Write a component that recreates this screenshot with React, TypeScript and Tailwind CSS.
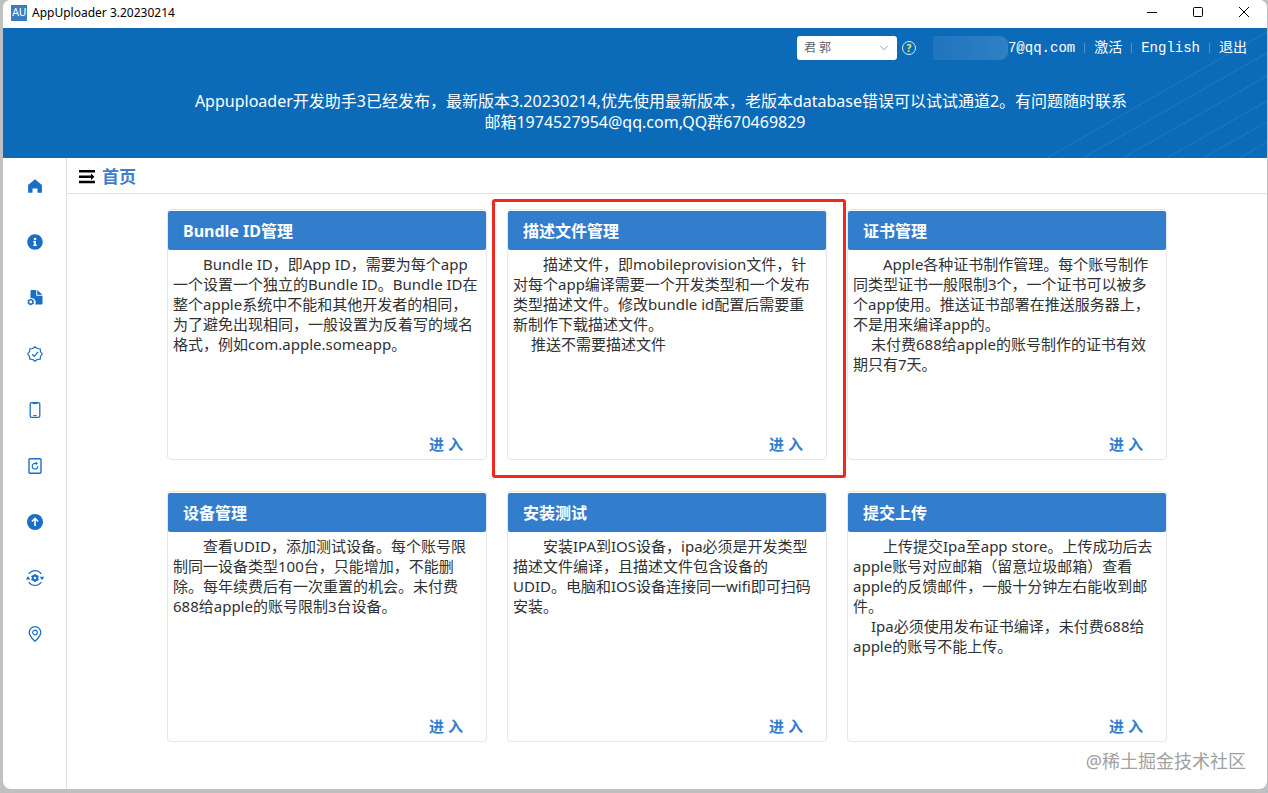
import { ChevronDown } from 'lucide-react';
import { FaInfoCircle } from 'react-icons/fa';

interface Feature {
  title: string;
  paragraphs: string[];
  highlighted?: boolean;
}

const features: Feature[] = [
  {
    title: 'Bundle ID管理',
    paragraphs: [
      'Bundle ID，即App ID，需要为每个app一个设置一个独立的Bundle ID。Bundle ID在整个apple系统中不能和其他开发者的相同，为了避免出现相同，一般设置为反着写的域名格式，例如com.apple.someapp。',
    ],
  },
  {
    title: '描述文件管理',
    paragraphs: [
      '描述文件，即mobileprovision文件，针对每个app编译需要一个开发类型和一个发布类型描述文件。修改bundle id配置后需要重新制作下载描述文件。',
      '推送不需要描述文件',
    ],
    highlighted: true,
  },
  {
    title: '证书管理',
    paragraphs: [
      'Apple各种证书制作管理。每个账号制作同类型证书一般限制3个，一个证书可以被多个app使用。推送证书部署在推送服务器上，不是用来编译app的。',
      '未付费688给apple的账号制作的证书有效期只有7天。',
    ],
  },
  {
    title: '设备管理',
    paragraphs: [
      '查看UDID，添加测试设备。每个账号限制同一设备类型100台，只能增加，不能删除。每年续费后有一次重置的机会。未付费688给apple的账号限制3台设备。',
    ],
  },
  {
    title: '安装测试',
    paragraphs: [
      '安装IPA到IOS设备，ipa必须是开发类型描述文件编译，且描述文件包含设备的UDID。电脑和IOS设备连接同一wifi即可扫码安装。',
    ],
  },
  {
    title: '提交上传',
    paragraphs: [
      '上传提交Ipa至app store。上传成功后去apple账号对应邮箱（留意垃圾邮箱）查看apple的反馈邮件，一般十分钟左右能收到邮件。',
      'Ipa必须使用发布证书编译，未付费688给apple的账号不能上传。',
    ],
  },
];

function HomeIcon() {
  return (
    <svg viewBox="0 0 16 16" className="h-4 w-4" fill="currentColor">
      <path d="M8 1.2 14.6 6.8a.8.8 0 0 1 .3.6V14.800h-4.400v-4.200h-5V14.800H1.100V7.400a.8.8 0 0 1 .3-.6Z" />
    </svg>
  );
}

function FileCogIcon() {
  return (
    <svg viewBox="0 0 16 16" className="h-4 w-4" fill="currentColor">
      <path d="M4.500 0H9.200v5.800h6.300v7.700a1 1 0 0 1-1 1H8.200A4.400 4.400 0 0 0 3.500 8V1a1 1 0 0 1 1-1Z" />
      <path d="M10.200 0 15.500 4.800h-5.300Z" />
      <circle cx="3.7" cy="12" r="2.2" fill="none" stroke="currentColor" strokeWidth="1.5" />
      <path
        d="M3.700 8.700v1M3.700 14.300v1M.8 10.400l.9.5M5.700 13.100l.9.5M.8 13.600l.9-.5M5.700 10.900l.9-.5"
        stroke="currentColor"
        strokeWidth="1.2"
      />
    </svg>
  );
}

function CertificateIcon() {
  return (
    <svg
      viewBox="0 0 16 16"
      className="h-4 w-4"
      fill="none"
      stroke="currentColor"
      strokeWidth="1.2"
      strokeLinejoin="round"
    >
      <path d="M15.300 8 13.500 10.300 13.200 13.200 10.300 13.500 8 15.300 5.700 13.500 2.800 13.200 2.500 10.300.7 8 2.500 5.700 2.800 2.800 5.700 2.500 8 .7 10.300 2.500 13.200 2.800 13.500 5.700Z" />
      <path d="M5.200 8.200 7.300 10.300 11 5.800" strokeWidth="1.3" />
    </svg>
  );
}

function PhoneIcon() {
  return (
    <svg viewBox="0 0 16 16" className="h-4 w-4" fill="none" stroke="currentColor" strokeWidth="1.3">
      <rect x="3.2" y=".7" width="9.6" height="14.6" rx="1.4" />
      <path d="M5.600 1.500h4.800" strokeWidth="1.2" />
      <path d="M6.200 13.600h3.600" strokeWidth="1" />
    </svg>
  );
}

function DeviceRecoverIcon() {
  return (
    <svg viewBox="0 0 16 16" className="h-4 w-4" fill="none" stroke="currentColor" strokeWidth="1.4">
      <rect x="2" y=".7" width="12" height="14.6" rx="1" />
      <path d="M10.800 8.200A2.800 2.800 0 1 1 8 5.400h1" strokeWidth="1.1" />
      <path d="M8.600 3.600 11 5.500 8.600 7.300Z" fill="currentColor" stroke="none" />
    </svg>
  );
}

function UploadIcon() {
  return (
    <svg viewBox="0 0 16 16" className="h-4 w-4">
      <circle cx="8" cy="8" r="8" fill="currentColor" />
      <path d="M8 12V4.600M4.900 7.500 8 4.400l3.100 3.100" fill="none" stroke="#fff" strokeWidth="1.6" />
    </svg>
  );
}

function SyncCogIcon() {
  return (
    <svg viewBox="0 0 20 18" className="h-[18px] w-5" fill="none" stroke="currentColor">
      <path d="M3.800 5A7.300 7.300 0 0 1 16.200 5M16.200 13A7.300 7.300 0 0 1 3.800 13" strokeWidth="1.3" />
      <path d="M.8 10.400 3 7 5.200 10.400ZM14.800 7.800h4.400L17 11.200Z" fill="currentColor" stroke="none" />
      <circle cx="10" cy="9" r="2.3" strokeWidth="2" />
      <path
        d="M10 5v1.400M10 11.600V13M6.500 7l1.300.7M12.200 10.300l1.300.7M6.500 11l1.300-.7M12.200 7.700l1.300-.7"
        strokeWidth="1.7"
      />
    </svg>
  );
}

function PinIcon() {
  return (
    <svg viewBox="0 0 16 16" className="h-4 w-4" fill="none" stroke="currentColor" strokeWidth="1.3">
      <path d="M8 15.200C5.500 12.800 2.200 10.100 2.200 6.500a5.800 5.800 0 0 1 11.600 0C13.800 10.100 10.500 12.800 8 15.200Z" />
      <circle cx="8" cy="6.5" r="2.3" strokeWidth="1.2" />
    </svg>
  );
}

function MenuUnfoldIcon() {
  return (
    <svg viewBox="0 0 16 14" className="h-[14px] w-4" fill="currentColor">
      <path d="M0 0h16v2.500H0ZM0 5.500h12V3.500L15.500 6.700 12 10V8H0ZM0 10.800h16v2.500H0Z" />
    </svg>
  );
}

const navItems = [
  { label: '首页', icon: <HomeIcon /> },
  { label: 'Bundle ID管理', icon: <FaInfoCircle className="h-4 w-4" /> },
  { label: '描述文件管理', icon: <FileCogIcon /> },
  { label: '证书管理', icon: <CertificateIcon /> },
  { label: '设备管理', icon: <PhoneIcon /> },
  { label: '安装测试', icon: <DeviceRecoverIcon /> },
  { label: '提交上传', icon: <UploadIcon /> },
  { label: '设置', icon: <SyncCogIcon /> },
  { label: '位置', icon: <PinIcon /> },
];

function TitleBar() {
  return (
    <div className="flex h-7 items-center justify-between bg-white pl-2">
      <div className="flex items-center gap-[5px] pb-[3px]">
        <span className="flex h-4 w-4 items-center justify-center bg-[#3c7dbd] font-['Roboto',sans-serif] text-[11px] leading-4 text-white">
          AU
        </span>
        <span className="text-[12px] leading-4 text-black">AppUploader 3.20230214</span>
      </div>
      <div className="flex pb-1 text-black">
        <button aria-label="Minimize" className="flex h-6 w-[46px] items-center justify-center">
          <svg viewBox="0 0 10 10" className="h-[10px] w-[10px]" stroke="currentColor">
            <path d="M0 5.500h10" />
          </svg>
        </button>
        <button aria-label="Maximize" className="flex h-6 w-[46px] items-center justify-center">
          <svg viewBox="0 0 10 10" className="h-[10px] w-[10px]" fill="none" stroke="currentColor">
            <rect x=".5" y=".5" width="9" height="9" rx="1" />
          </svg>
        </button>
        <button aria-label="Close" className="flex h-6 w-[46px] items-center justify-center">
          <svg viewBox="0 0 10 10" className="h-[10px] w-[10px]" stroke="currentColor">
            <path d="M0 0l10 10M10 0 0 10" />
          </svg>
        </button>
      </div>
    </div>
  );
}

function Separator() {
  return <span className="h-[10px] w-px bg-[#4a93cf]" />;
}

function Banner() {
  return (
    <header className="relative bg-[#0c6bb8] pb-[25px] text-white">
      <svg
        viewBox="0 0 220 130"
        className="pointer-events-none absolute right-0 bottom-0 h-[130px] w-[220px]"
        fill="none"
        stroke="#1a75be"
        strokeWidth="1.5"
      >
        <path d="M0 130 220 4M36 130 220 25M76 130 220 48M120 130 220 73M156 130 220 94M193 130 220 114" />
      </svg>
      <div className="relative flex h-10 items-center justify-end pr-5">
        <div className="relative mr-[5px]">
          <select
            aria-label="账号"
            className="block h-6 w-[100px] appearance-none rounded-[3px] bg-white pr-6 pl-[7px] text-[12px] text-[#606266]"
          >
            <option>君 郭</option>
          </select>
          <ChevronDown
            className="pointer-events-none absolute top-[5px] right-[6px] h-[14px] w-[14px] text-[#b4b8c0]"
            strokeWidth={1.8}
          />
        </div>
        <button
          aria-label="帮助"
          className="mr-[17px] flex h-[14px] w-[14px] items-center justify-center rounded-full border border-[#d8f0f0] text-[10px] leading-3 font-bold text-[#e4ee6a]"
        >
          ?
        </button>
        <div className="flex items-center gap-[9px] font-['Liberation_Mono','Noto_Sans_CJK_SC',monospace] text-[14px] leading-5">
          <div className="flex items-center">
            <span className="h-6 w-[75px] rounded-r-lg bg-linear-to-r from-[#1f75bf] to-[#2f80c4]" />
            <span>7@qq.com</span>
          </div>
          <Separator />
          <a href="#activate">激活</a>
          <Separator />
          <a href="#language">English</a>
          <Separator />
          <a href="#logout">退出</a>
        </div>
      </div>
      <p className="relative mt-[23px] pr-[137px] pl-[157px] text-center indent-8 text-[16px] leading-[21px]">
        Appuploader开发助手3已经发布，最新版本3.20230214,优先使用最新版本，老版本database错误可以试试通道2。有问题随时联系邮箱1974527954@qq.com,QQ群670469829
      </p>
    </header>
  );
}

function Sidebar() {
  return (
    <nav className="flex w-16 shrink-0 flex-col border-r border-[#dcdfe6] text-[#1a6fc4]">
      {navItems.map((item) => (
        <button
          key={item.label}
          aria-label={item.label}
          title={item.label}
          className="flex h-14 items-center justify-center"
        >
          {item.icon}
        </button>
      ))}
    </nav>
  );
}

function FeatureCard({ title, paragraphs, highlighted }: Feature) {
  return (
    <section className="relative flex min-h-[251px] flex-col rounded-[4px] border border-[#e4e7ed] bg-white pt-px">
      <h2 className="rounded-[2px] bg-[#337ecc] px-[15px] pt-px text-[16px] leading-[38px] font-bold text-white">
        {title}
      </h2>
      <div className="flex-1 pt-1 pr-2 pl-[5px] text-[15px] leading-5 text-[#303133]">
        {paragraphs.map((text, i) => (
          <p key={text} className={i === 0 ? 'indent-[30px]' : 'indent-[18px]'}>
            {text}
          </p>
        ))}
      </div>
      <div className="flex justify-end pr-[23px] pb-[5px]">
        <button className="text-[15px] leading-5 font-bold text-[#337ecc]">进 入</button>
      </div>
      {highlighted && (
        <div className="pointer-events-none absolute -top-[11px] -right-5 -bottom-[19px] -left-4 z-10 rounded-[3px] border-3 border-[#f0281e]" />
      )}
    </section>
  );
}

export default function App() {
  return (
    <div className="flex min-h-screen flex-col bg-[#bfc0c2] pr-px pb-1 pl-[3px] font-['Noto_Sans','Noto_Sans_CJK_SC',sans-serif]">
      <div className="relative flex flex-1 flex-col overflow-hidden rounded-lg bg-white">
        <TitleBar />
        <Banner />
        <div className="flex flex-1">
          <Sidebar />
          <main className="min-w-0 flex-1">
            <div className="flex h-9 items-center gap-[7px] border-b border-[#dcdfe6] pt-[3px] pl-3">
              <button aria-label="展开菜单" className="text-black">
                <MenuUnfoldIcon />
              </button>
              <h1 className="text-[17px] leading-6 font-bold text-[#3f7dc8]">首页</h1>
            </div>
            <div className="mx-auto grid w-full max-w-[1000px] grid-cols-3 gap-x-5 gap-y-[31px] pt-[15px]">
              {features.map((feature) => (
                <FeatureCard key={feature.title} {...feature} />
              ))}
            </div>
          </main>
        </div>
        <span className="pointer-events-none absolute right-[21px] bottom-4 text-[18px] leading-6 text-[#a0a0a0]">
          @稀土掘金技术社区
        </span>
      </div>
    </div>
  );
}
